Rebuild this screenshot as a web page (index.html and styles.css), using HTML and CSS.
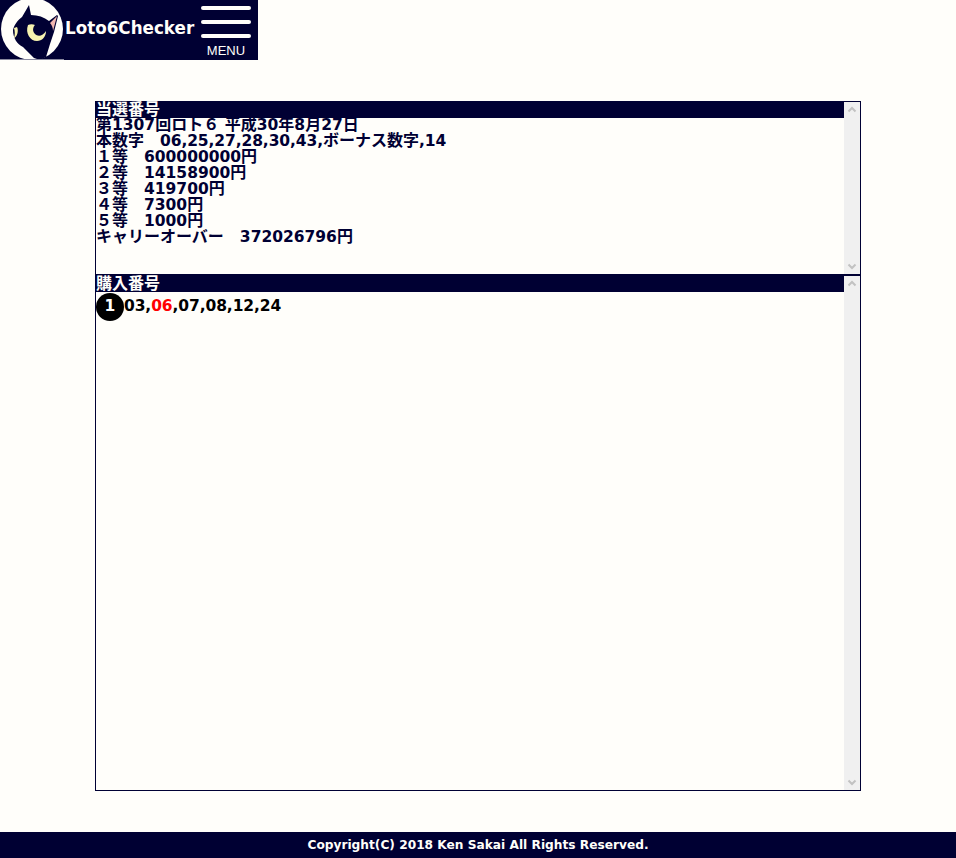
FILE: index.html
```html
<!DOCTYPE html>
<html lang="ja">
<head>
<meta charset="utf-8">
<title>Loto6Checker</title>
<link rel="stylesheet" href="styles.css">
</head>
<body>
<header class="topbar">
  <svg class="logo" width="64" height="60" viewBox="0 0 64 60">
    <rect width="64" height="60" fill="#000033"/>
    <circle cx="32" cy="29" r="31" fill="#fffefa"/>
    <path d="M29 5 L31 15 C38 15 44 17 49 21 L57 15 L58 16 L54 32 L50 44 L46 57 L40 60 L34 58 L23 47 C17 44 13 38 13 30 C14 25 18 20 22 17 Z" fill="#000033"/>
    <path d="M50 23 L57 16 L53 31 C53 28 52 25 50 23 Z" fill="#f2b8b0"/>
    <path d="M14 28 C15 31 15 35 14 38 C17 37 19 31 17 27 Z" fill="#f7f3b0"/>
    <path d="M28 25 C25 33 30 41 37 41 C42 41 46 37 46 31 C43 36 38 37 35 34 C32 31 33 27 35 25 C33 24 30 24 28 25 Z" fill="#f7f3b0"/>
    <rect y="59" width="64" height="1" fill="#8a8aa0"/>
  </svg>
  <span class="brand">Loto6Checker</span>
  <div class="menu">
    <span class="menu-bar"></span>
    <span class="menu-bar"></span>
    <span class="menu-bar"></span>
    <span class="menu-label">MENU</span>
  </div>
</header>

<main class="main">
  <section class="panel panel-result">
    <div class="panel-body">
      <h2 class="panel-title">当選番号</h2>
      <div class="lines">
        <div>第<span class="num">1307</span>回ロト６ 平成<span class="num">30</span>年<span class="num">8</span>月<span class="num">27</span>日</div>
        <div>本数字　<span class="num csv">06,25,27,28,30,43,</span>ボーナス数字<span class="num csv">,14</span></div>
        <div>１等　<span class="num">600000000</span>円</div>
        <div>２等　<span class="num">14158900</span>円</div>
        <div>３等　<span class="num">419700</span>円</div>
        <div>４等　<span class="num">7300</span>円</div>
        <div>５等　<span class="num">1000</span>円</div>
        <div>キャリーオーバー　<span class="num">372026796</span>円</div>
      </div>
    </div>
    <div class="scrollbar">
      <svg width="16" height="16" viewBox="0 0 16 16"><path d="M4.5 9.5 L8 6 L11.5 9.5" class="chev"/></svg>
      <svg width="16" height="16" viewBox="0 0 16 16"><path d="M4.5 6.5 L8 10 L11.5 6.5" class="chev"/></svg>
    </div>
  </section>

  <section class="panel panel-bought">
    <div class="panel-body">
      <h2 class="panel-title">購入番号</h2>
      <div class="ticket">
        <span class="badge">1</span>
        <span class="ticket-nums csv">03,<span class="hit">06</span>,07,08,12,24</span>
      </div>
    </div>
    <div class="scrollbar">
      <svg width="16" height="16" viewBox="0 0 16 16"><path d="M4.5 9.5 L8 6 L11.5 9.5" class="chev"/></svg>
      <svg width="16" height="16" viewBox="0 0 16 16"><path d="M4.5 6.5 L8 10 L11.5 6.5" class="chev"/></svg>
    </div>
  </section>
</main>

<footer class="footer">Copyright(C) 2018 Ken Sakai All Rights Reserved.</footer>
</body>
</html>
```
FILE: styles.css
```css
* { box-sizing: border-box; }
html, body { margin: 0; padding: 0; }
body {
  background: #fffefa;
  color: #000033;
  font-family: "DejaVu Sans", "Noto Sans CJK JP", sans-serif;
  font-size: 16px;
  font-weight: 700;
  line-height: 16px;
  height: 858px;
  overflow: hidden;
}
.topbar {
  display: flex;
  align-items: center;
  width: 258px;
  height: 60px;
  background: #000033;
  color: #fffefa;
}
.logo { flex: none; display: block; }
.brand {
  flex: none;
  width: 137px;
  padding-left: 1px;
  font-size: 16.75px;
  line-height: 56px;
  height: 60px;
  white-space: nowrap;
}
.menu {
  flex: none;
  display: flex;
  flex-direction: column;
  align-items: center;
  width: 50px;
  height: 60px;
  padding-top: 6px;
  gap: 10px;
}
.menu-bar {
  display: block;
  width: 50px;
  height: 4px;
  border-radius: 2px;
  background: #fffefa;
}
.menu-label {
  font-family: "Liberation Sans", sans-serif;
  font-weight: 400;
  font-size: 13px;
  line-height: 14px;
  margin-top: -4px;
}
.main {
  width: 766px;
  margin: 41px 0 41px 95px;
}
.panel {
  display: flex;
  border: 1px solid #000033;
}
.panel-result { height: 174px; }
.panel-bought { height: 516px; }
.panel-body { flex: 1; min-width: 0; }
.panel-title {
  margin: 0;
  height: 16px;
  font-size: 16px;
  line-height: 16px;
  background: #000033;
  color: #fffefa;
}
.lines { margin-top: -1px; }
.num { font-size: 15.5px; }
.csv { letter-spacing: -0.1px; }
.ticket { display: flex; align-items: flex-start; padding-top: 1px; }
.badge {
  flex: none;
  width: 28px;
  height: 28px;
  border-radius: 50%;
  background: #000;
  color: #fff;
  font-size: 15.5px;
  line-height: 27px;
  text-align: center;
}
.ticket-nums { font-size: 15.5px; color: #000; padding-top: 5px; }
.hit { color: #f00; }
.scrollbar {
  flex: none;
  width: 16px;
  background: #f0f0f0;
  display: flex;
  flex-direction: column;
  justify-content: space-between;
}
.chev { fill: none; stroke: #c2c2c2; stroke-width: 2; }
.footer {
  height: 26px;
  background: #000033;
  color: #fffefa;
  font-size: 12.2px;
  line-height: 26px;
  text-align: center;
}
```
